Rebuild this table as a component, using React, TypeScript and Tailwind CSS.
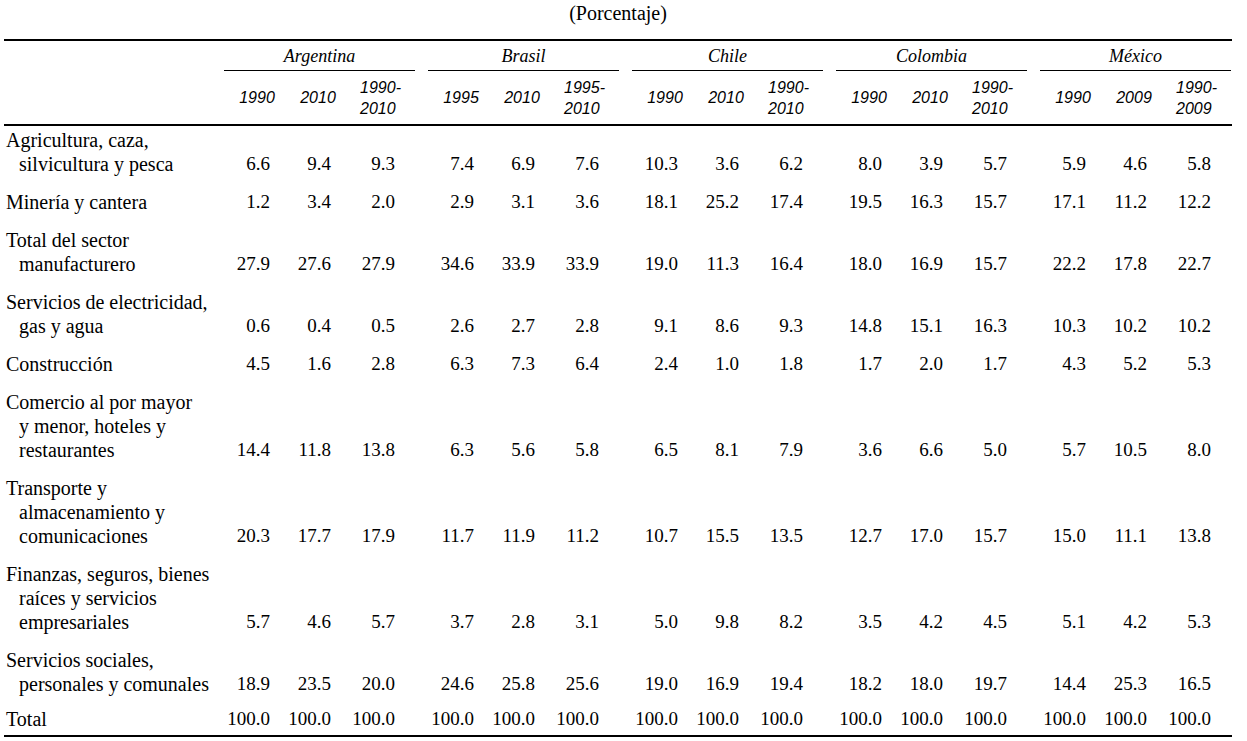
import React from "react";

const groups = [
  { name: "Argentina", years: ["1990", "2010", ["1990-", "2010"]] },
  { name: "Brasil", years: ["1995", "2010", ["1995-", "2010"]] },
  { name: "Chile", years: ["1990", "2010", ["1990-", "2010"]] },
  { name: "Colombia", years: ["1990", "2010", ["1990-", "2010"]] },
  { name: "México", years: ["1990", "2009", ["1990-", "2009"]] },
];

const rows: { label: string[]; values: string[] }[] = [
  {
    label: ["Agricultura, caza,", "silvicultura y pesca"],
    values: ["6.6", "9.4", "9.3", "7.4", "6.9", "7.6", "10.3", "3.6", "6.2", "8.0", "3.9", "5.7", "5.9", "4.6", "5.8"],
  },
  {
    label: ["Minería y cantera"],
    values: ["1.2", "3.4", "2.0", "2.9", "3.1", "3.6", "18.1", "25.2", "17.4", "19.5", "16.3", "15.7", "17.1", "11.2", "12.2"],
  },
  {
    label: ["Total del sector", "manufacturero"],
    values: ["27.9", "27.6", "27.9", "34.6", "33.9", "33.9", "19.0", "11.3", "16.4", "18.0", "16.9", "15.7", "22.2", "17.8", "22.7"],
  },
  {
    label: ["Servicios de electricidad,", "gas y agua"],
    values: ["0.6", "0.4", "0.5", "2.6", "2.7", "2.8", "9.1", "8.6", "9.3", "14.8", "15.1", "16.3", "10.3", "10.2", "10.2"],
  },
  {
    label: ["Construcción"],
    values: ["4.5", "1.6", "2.8", "6.3", "7.3", "6.4", "2.4", "1.0", "1.8", "1.7", "2.0", "1.7", "4.3", "5.2", "5.3"],
  },
  {
    label: ["Comercio al por mayor", "y menor, hoteles y", "restaurantes"],
    values: ["14.4", "11.8", "13.8", "6.3", "5.6", "5.8", "6.5", "8.1", "7.9", "3.6", "6.6", "5.0", "5.7", "10.5", "8.0"],
  },
  {
    label: ["Transporte y", "almacenamiento y", "comunicaciones"],
    values: ["20.3", "17.7", "17.9", "11.7", "11.9", "11.2", "10.7", "15.5", "13.5", "12.7", "17.0", "15.7", "15.0", "11.1", "13.8"],
  },
  {
    label: ["Finanzas, seguros, bienes", "raíces y servicios", "empresariales"],
    values: ["5.7", "4.6", "5.7", "3.7", "2.8", "3.1", "5.0", "9.8", "8.2", "3.5", "4.2", "4.5", "5.1", "4.2", "5.3"],
  },
  {
    label: ["Servicios sociales,", "personales y comunales"],
    values: ["18.9", "23.5", "20.0", "24.6", "25.8", "25.6", "19.0", "16.9", "19.4", "18.2", "18.0", "19.7", "14.4", "25.3", "16.5"],
  },
];

const total = Array(15).fill("100.0");

const serif = "font-['Liberation_Serif','Times_New_Roman',serif]";

const Row = ({ label, values, className = "" }: { label: string[]; values: string[]; className?: string }) => (
  <div className={`flex items-end leading-[24px] ${className}`}>
    <div className="w-[220px] shrink-0 pl-[2px] text-[20px]">
      {label.map((line, i) => (
        <div key={i} className={i > 0 ? "pl-[13px]" : ""}>
          {line}
        </div>
      ))}
    </div>
    <div className="flex gap-[13px] text-[19px]">
      {groups.map((g, gi) => (
        <div key={g.name} className="flex w-[191px] shrink-0">
          <div className="w-[46px] text-right">{values[gi * 3]}</div>
          <div className="w-[61px] text-right">{values[gi * 3 + 1]}</div>
          <div className="w-[64px] text-right">{values[gi * 3 + 2]}</div>
        </div>
      ))}
    </div>
  </div>
);

export default function App() {
  return (
    <div className={`w-[1247px] h-[741px] bg-white text-black ${serif}`}>
      <div className="ml-[4px] w-[1228px]">
        {/* Title */}
        <div className="pt-[1px] text-center text-[20px] leading-[24px]">(Porcentaje)</div>
        <div className="mt-[14px] h-[1.5px] bg-black" />

        {/* Country headers */}
        <div className="flex pt-[3px]">
          <div className="w-[220px] shrink-0" />
          <div className="flex gap-[13px]">
            {groups.map((g) => (
              <div key={g.name} className="w-[191px] shrink-0">
                <div className="text-center text-[18px] italic leading-[24px]">{g.name}</div>
                <div className="mt-[2px] h-px bg-black" />
              </div>
            ))}
          </div>
        </div>

        {/* Year headers */}
        <div className="flex pt-[6px] font-['Liberation_Sans',Arial,sans-serif] text-[16px] italic leading-[21px]">
          <div className="w-[220px] shrink-0" />
          <div className="flex gap-[13px]">
            {groups.map((g) => (
              <div key={g.name} className="flex w-[191px] shrink-0 items-center">
                <div className="w-[66px] text-center">{g.years[0] as string}</div>
                <div className="w-[56px] text-center">{g.years[1] as string}</div>
                <div className="flex w-[69px] justify-center">
                  <div className="text-left">
                    {(g.years[2] as string[]).map((y) => (
                      <div key={y}>{y}</div>
                    ))}
                  </div>
                </div>
              </div>
            ))}
          </div>
        </div>
        <div className="mt-[5.5px] h-[1.5px] bg-black" />

        {/* Body */}
        <div className="flex flex-col gap-[14px] pt-[2.5px]">
          {rows.map((r) => (
            <Row key={r.label[0]} label={r.label} values={r.values} />
          ))}
        </div>
        <Row label={["Total"]} values={total} className="mt-[11px]" />
        <div className="mt-[4px] h-[1.5px] bg-black" />
      </div>
    </div>
  );
}
